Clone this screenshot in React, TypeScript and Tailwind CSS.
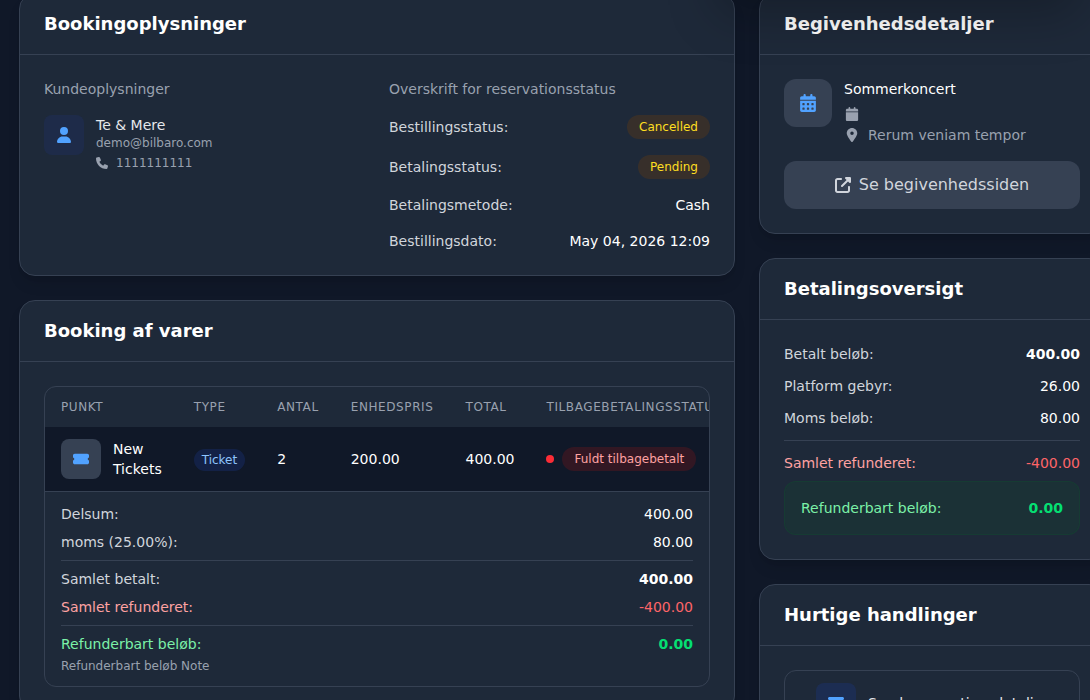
import type { ReactNode } from 'react';
import clsx from 'clsx';
import {
    FaCalendar,
    FaCalendarDays,
    FaEnvelope,
    FaLocationDot,
    FaPhone,
    FaTicketSimple,
    FaUpRightFromSquare,
    FaUser,
} from 'react-icons/fa6';

interface CardProps {
    title: string;
    children: ReactNode;
}

const Card = ({ title, children }: CardProps) => (
    <section className="rounded-2xl border border-gray-700 bg-gray-800 shadow-lg">
        <div className="border-b border-gray-700 px-6 py-4">
            <h2 className="text-lg font-bold text-white">{title}</h2>
        </div>
        <div className="p-6">{children}</div>
    </section>
);

interface RowProps {
    label: string;
    children: ReactNode;
    labelClass?: string;
    valueClass?: string;
}

const Row = ({ label, children, labelClass = 'text-gray-300', valueClass = 'text-white' }: RowProps) => (
    <div className="flex items-center justify-between text-sm">
        <span className={labelClass}>{label}</span>
        <span className={valueClass}>{children}</span>
    </div>
);

const badgeStyles = {
    yellow: 'bg-yellow-900/30 text-yellow-300',
    red: 'bg-red-900/30 text-red-300',
};

const Badge = ({ color, children }: { color: keyof typeof badgeStyles; children: ReactNode }) => (
    <span className={clsx('block rounded-full px-3 py-1 text-xs whitespace-nowrap', badgeStyles[color])}>
        {children}
    </span>
);

const columns = ['Punkt', 'Type', 'Antal', 'Enhedspris', 'Total', 'Tilbagebetalingsstatus'];

const items = [
    { name: 'New Tickets', type: 'Ticket', quantity: 2, price: '200.00', total: '400.00', refund: 'Fuldt tilbagebetalt' },
];

const BookingInfo = () => (
    <Card title="Bookingoplysninger">
        <div className="grid grid-cols-2 gap-6">
            <div>
                <h3 className="mb-4 text-sm text-gray-400">Kundeoplysninger</h3>
                <div className="flex items-start gap-3">
                    <div className="flex size-10 items-center justify-center rounded-lg bg-blue-900/20">
                        <FaUser className="text-blue-400" size={16} />
                    </div>
                    <div>
                        <p className="text-sm text-gray-200">Te &amp; Mere</p>
                        <p className="text-xs text-gray-400">demo@bilbaro.com</p>
                        <p className="mt-1 flex items-center gap-2 text-xs text-gray-400">
                            <FaPhone size={12} />
                            1111111111
                        </p>
                    </div>
                </div>
            </div>
            <div>
                <h3 className="mb-4 text-sm text-gray-400">Overskrift for reservationsstatus</h3>
                <div className="space-y-4">
                    <Row label="Bestillingsstatus:">
                        <Badge color="yellow">Cancelled</Badge>
                    </Row>
                    <Row label="Betalingsstatus:">
                        <Badge color="yellow">Pending</Badge>
                    </Row>
                    <Row label="Betalingsmetode:">Cash</Row>
                    <Row label="Bestillingsdato:">May 04, 2026 12:09</Row>
                </div>
            </div>
        </div>
    </Card>
);

const BookingItems = () => (
    <Card title="Booking af varer">
        <div className="overflow-hidden rounded-xl border border-gray-700">
            <div className="overflow-hidden">
                <table className="w-full text-left">
                    <thead>
                        <tr>
                            {columns.map((column) => (
                                <th key={column} className="px-4 py-3 text-xs font-medium tracking-wider text-gray-400 uppercase">
                                    {column}
                                </th>
                            ))}
                        </tr>
                    </thead>
                    <tbody className="bg-gray-900 text-sm text-white">
                        {items.map((item) => (
                            <tr key={item.name}>
                                <td className="px-4 py-3">
                                    <div className="flex items-center gap-3">
                                        <div className="flex size-10 shrink-0 items-center justify-center rounded-lg bg-gray-700">
                                            <FaTicketSimple className="text-blue-400" size={16} />
                                        </div>
                                        <span>{item.name}</span>
                                    </div>
                                </td>
                                <td className="px-4 py-3">
                                    <span className="rounded-full bg-blue-900/30 px-2 py-1 text-xs text-blue-300">{item.type}</span>
                                </td>
                                <td className="px-4 py-3">{item.quantity}</td>
                                <td className="px-4 py-3">{item.price}</td>
                                <td className="px-4 py-3">{item.total}</td>
                                <td className="px-4 py-3">
                                    <div className="flex items-center gap-2">
                                        <span className="size-2 rounded-full bg-red-500" />
                                        <Badge color="red">{item.refund}</Badge>
                                    </div>
                                </td>
                            </tr>
                        ))}
                    </tbody>
                </table>
            </div>
            <div className="space-y-2 border-t border-gray-700 px-4 py-3">
                <Row label="Delsum:">400.00</Row>
                <Row label="moms (25.00%):">80.00</Row>
                <div className="space-y-2 border-t border-gray-700 pt-2">
                    <Row label="Samlet betalt:" valueClass="font-bold text-white">400.00</Row>
                    <Row label="Samlet refunderet:" labelClass="text-red-300" valueClass="text-red-400">-400.00</Row>
                </div>
                <div className="border-t border-gray-700 pt-2">
                    <Row label="Refunderbart beløb:" labelClass="text-green-300" valueClass="font-bold text-green-400">0.00</Row>
                    <p className="mt-1 text-xs text-gray-400">Refunderbart beløb Note</p>
                </div>
            </div>
        </div>
    </Card>
);

const EventDetails = () => (
    <Card title="Begivenhedsdetaljer">
        <div className="flex items-start gap-3">
            <div className="flex size-12 items-center justify-center rounded-xl bg-gray-700">
                <FaCalendarDays className="text-blue-400" size={18} />
            </div>
            <div className="text-sm text-gray-400">
                <p className="text-white">Sommerkoncert</p>
                <div className="mt-1 flex h-[22px] w-4 items-center justify-center">
                    <FaCalendar size={14} />
                </div>
                <p className="flex items-center gap-2">
                    <span className="flex w-4 justify-center">
                        <FaLocationDot size={14} />
                    </span>
                    Rerum veniam tempor
                </p>
            </div>
        </div>
        <a href="#" className="mt-4 flex items-center justify-center gap-2 rounded-xl bg-gray-700 px-4 py-3 text-gray-300 hover:bg-gray-600">
            <FaUpRightFromSquare size={16} />
            Se begivenhedssiden
        </a>
    </Card>
);

const PaymentSummary = () => (
    <Card title="Betalingsoversigt">
        <div className="space-y-3">
            <Row label="Betalt beløb:" valueClass="font-bold text-white">400.00</Row>
            <Row label="Platform gebyr:">26.00</Row>
            <Row label="Moms beløb:">80.00</Row>
            <div className="border-t border-gray-700 pt-3">
                <Row label="Samlet refunderet:" labelClass="text-red-300" valueClass="text-red-400">-400.00</Row>
                <div className="mt-2 rounded-xl border border-green-900/30 bg-green-900/20 p-4">
                    <Row label="Refunderbart beløb:" labelClass="text-green-300" valueClass="font-bold text-green-400">0.00</Row>
                </div>
            </div>
        </div>
    </Card>
);

const QuickActions = () => (
    <Card title="Hurtige handlinger">
        <button type="button" className="flex w-full items-center justify-center gap-3 rounded-xl border border-gray-700 p-3 text-sm text-gray-200 hover:bg-gray-700">
            <span className="flex size-10 items-center justify-center rounded-lg bg-blue-900/30">
                <FaEnvelope className="text-blue-400" size={16} />
            </span>
            Send reservationsdetaljer
        </button>
    </Card>
);

export default function App() {
    return (
        <div className="relative h-screen overflow-hidden bg-gray-900 font-['DejaVu_Sans',sans-serif]">
            <main className="-mt-[7px] -mr-[15px] grid grid-cols-3 items-start gap-6 pl-[19px]">
                <div className="col-span-2 space-y-6">
                    <BookingInfo />
                    <BookingItems />
                </div>
                <div className="space-y-6">
                    <EventDetails />
                    <PaymentSummary />
                    <QuickActions />
                </div>
            </main>
            {/* shadow of the menu panel above the sidebar */}
            <div aria-hidden="true" className="pointer-events-none absolute -top-40 right-0 h-40 w-96 shadow-2xl" />
        </div>
    );
}
